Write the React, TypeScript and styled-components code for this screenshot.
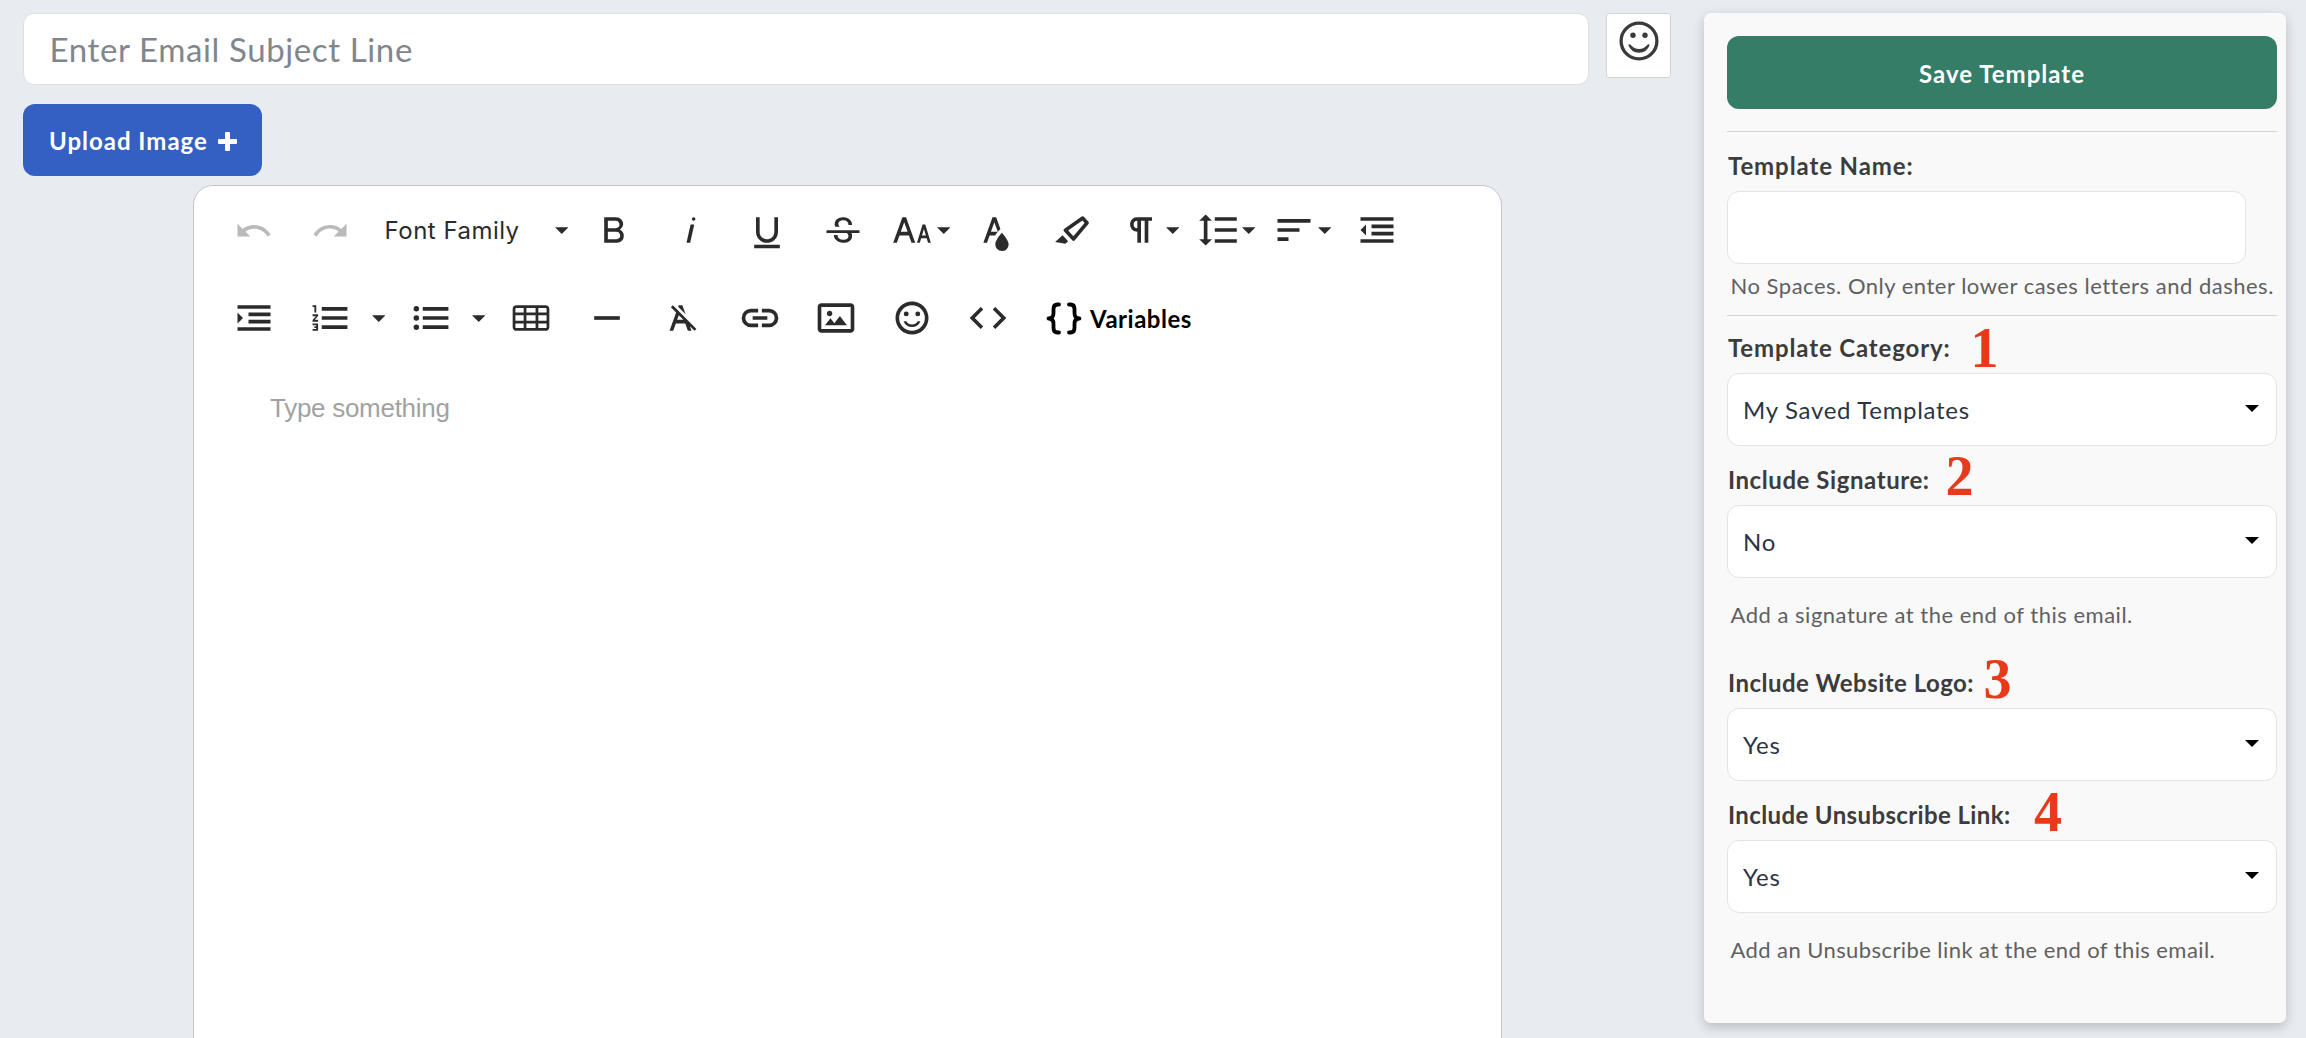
import React from "react";
import styled, { createGlobalStyle } from "styled-components";

const uiFont = `Lato, "Open Sans", sans-serif`;

const GlobalStyle = createGlobalStyle`
  *, *::before, *::after { box-sizing: border-box; }
  body { margin: 0; background: #e8ebf0; font-family: ${uiFont}; overflow: hidden; }
  button, input { font-family: inherit; }
`;

const Page = styled.div`
  display: flex;
  justify-content: space-between;
  width: 2306px;
  height: 1038px;
  padding: 13px 20px 0 23px;
  overflow: hidden;
`;

const Main = styled.main`
  display: flex;
  flex-direction: column;
  align-items: flex-start;
  width: 1648px;
`;

const SubjectRow = styled.div`
  display: flex;
  flex: none;
  justify-content: space-between;
  align-items: flex-start;
  width: 100%;
`;

const SubjectInput = styled.input`
  width: 1566px;
  height: 72px;
  padding: 0 25.5px;
  border: 1px solid #e0e0e0;
  border-radius: 11px;
  background: #fff;
  color: #333;
  font-size: 33px;
  letter-spacing: 0.62px;
  &::placeholder { color: #80868e; opacity: 1; }
`;

const EmojiButton = styled.button`
  display: flex;
  justify-content: center;
  align-items: flex-start;
  width: 65px;
  height: 65px;
  padding: 5.5px 0 0;
  border: 1px solid #d3d5d8;
  border-radius: 3px;
  background: #fff;
`;

const UploadButton = styled.button`
  display: flex;
  flex: none;
  align-items: center;
  gap: 10px;
  width: 239px;
  height: 72px;
  margin-top: 19px;
  padding: 0 0 0 26px;
  border: 0;
  border-radius: 12px;
  background: #345fc3;
  color: #fff;
  font-size: 24px;
  font-weight: 700;
  letter-spacing: 0.99px;
  svg { margin-top: 2px; }
`;

const Editor = styled.section`
  flex: none;
  width: 1309px;
  height: 900px;
  margin: 9px 0 0 170px;
  border: 1px solid #c6c6c8;
  border-radius: 20px;
  background: #fff;
`;

const ToolRow = styled.div`
  display: flex;
  align-items: stretch;
  height: 88px;
  padding-left: 22px;
`;

const ToolButton = styled.button<{ $muted?: boolean; $menu?: boolean }>`
  display: flex;
  align-items: center;
  justify-content: ${(p) => (p.$menu ? "flex-start" : "center")};
  gap: 2.5px;
  width: 76.3px;
  padding: 0 0 0 ${(p) => (p.$menu ? "9px" : "0")};
  border: 0;
  background: none;
  color: ${(p) => (p.$muted ? "#bababa" : "#2b2b2b")};
  svg { flex: none; }
`;

const ListOptions = styled.button`
  display: flex;
  align-items: center;
  width: 23.8px;
  padding: 0 0 0 3px;
  border: 0;
  background: none;
  color: #2b2b2b;
`;

const FontFamilyButton = styled.button`
  display: flex;
  align-items: center;
  justify-content: space-between;
  width: 207.6px;
  padding: 0 8px 0 16px;
  border: 0;
  background: none;
  color: #2b2b2b;
  font-family: Inter, sans-serif;
  font-size: 24px;
  letter-spacing: 0.48px;
`;

const VariablesButton = styled.button`
  display: flex;
  align-items: center;
  gap: 8.5px;
  margin-left: 19px;
  padding: 0;
  border: 0;
  background: none;
  color: #000;
  font-size: 24px;
  font-weight: 700;
  letter-spacing: 0.5px;
`;

const Canvas = styled.div`
  padding: 31px 76px;
  color: #a2a2a2;
  font: 26px/30px "Liberation Sans", Arial, sans-serif;
  letter-spacing: -0.28px;
`;

const Sidebar = styled.aside`
  display: flex;
  flex-direction: column;
  width: 582px;
  height: 1010px;
  padding: 23px 9px 0 23px;
  border-radius: 7px;
  background: #f9f9f9;
  box-shadow: 0 4px 12px rgba(0, 0, 0, 0.2);
`;

const SaveButton = styled.button`
  flex: none;
  height: 73px;
  padding: 1px 0 0;
  border: 0;
  border-radius: 12px;
  background: #357d66;
  color: #fff;
  font-size: 24px;
  font-weight: 700;
  letter-spacing: 1.02px;
`;

const Divider = styled.hr<{ $top: number }>`
  flex: none;
  width: 100%;
  height: 1px;
  margin: ${(p) => p.$top}px 0 0;
  border: 0;
  background: #d3d5d5;
`;

const Label = styled.label<{ $top: number; $tracking: number }>`
  position: relative;
  flex: none;
  height: 32px;
  margin: ${(p) => p.$top}px 0 10px 1px;
  color: #3c3c3c;
  font-size: 24px;
  font-weight: 700;
  line-height: 34px;
  letter-spacing: ${(p) => p.$tracking}px;
`;

const StepMark = styled.span<{ $left: number; $shift?: number }>`
  position: absolute;
  top: ${(p) => p.$shift ?? 0}px;
  left: ${(p) => p.$left}px;
  color: #e8391a;
  font: 700 56px/32px "Liberation Serif", "Times New Roman", serif;
  letter-spacing: 0;
`;

const NameInput = styled.input`
  flex: none;
  width: 519px;
  height: 73px;
  border: 1px solid #e3e3e3;
  border-radius: 12px;
  background: #fff;
`;

const SelectBox = styled.button`
  display: flex;
  flex: none;
  align-items: center;
  justify-content: space-between;
  height: 73px;
  padding: 0 17px 0 15px;
  border: 1px solid #e3e3e3;
  border-radius: 12px;
  background: #fff;
  color: #000;
`;

const SelectValue = styled.span`
  color: #2b3445;
  font-size: 24px;
  letter-spacing: 0.7px;
`;

const SelectArrow = styled.svg`
  margin-bottom: 2px;
`;

const Help = styled.p<{ $top: number; $tracking: number }>`
  flex: none;
  margin: ${(p) => p.$top}px 0 0 3.5px;
  color: #606060;
  font-size: 22px;
  line-height: 30px;
  letter-spacing: ${(p) => p.$tracking}px;
  white-space: nowrap;
`;

const icons = {
  undo: "M10.4,9.4c-1.7,0.3-3.2,0.9-4.6,2L3,8.5v7h7l-2.7-2.7c3.7-2.6,8.8-1.8,11.5,1.9c0.2,0.3,0.4,0.5,0.5,0.8l1.8-0.9C18.9,10.8,14.7,8.7,10.4,9.4z",
  redo: "M13.6,9.4c1.7,0.3,3.2,0.9,4.6,2L21,8.5v7h-7l2.7-2.7C13,10.1,7.9,11,5.3,14.7c-0.2,0.3-0.4,0.5-0.5,0.8L3,14.6C5.1,10.8,9.3,8.7,13.6,9.4z",
  bold: "M15.25,11.8h0A3.68,3.68,0,0,0,17,9a3.93,3.93,0,0,0-3.86-4H6.65V19h7a3.74,3.74,0,0,0,3.7-3.78V15.1A3.64,3.64,0,0,0,15.25,11.8ZM8.65,7h4.2a2.09,2.09,0,0,1,2,1.3,2.09,2.09,0,0,1-1.37,2.61,2.23,2.23,0,0,1-.63.09H8.65Zm4.6,10H8.65V13h4.6a2.09,2.09,0,0,1,2,1.3,2.09,2.09,0,0,1-1.37,2.61A2.23,2.23,0,0,1,13.25,17Z",
  italic: "M11.76,9h2l-2.2,10h-2Zm1.68-4a1,1,0,1,0,1,1,1,1,0,0,0-1-1Z",
  underline: "M19,20v2H5V20Zm-3-6.785a4,4,0,0,1-5.74,3.4A3.75,3.75,0,0,1,8,13.085V5.005H6v8.21a6,6,0,0,0,8,5.44,5.851,5.851,0,0,0,4-5.65v-8H16ZM16,5v0h2V5ZM8,5H6v0H8Z",
  strike: "M3,12.20294H21v1.5H16.63422a3.59782,3.59782,0,0,1,.34942,1.5929,3.252,3.252,0,0,1-1.31427,2.6997A5.55082,5.55082,0,0,1,12.20251,19a6.4421,6.4421,0,0,1-2.62335-.539,4.46335,4.46335,0,0,1-1.89264-1.48816,3.668,3.668,0,0,1-.67016-2.15546V14.704h.28723v-.0011h.34149v.0011H9.02v.11334a2.18275,2.18275,0,0,0,.85413,1.83069,3.69,3.69,0,0,0,2.32836.67926,3.38778,3.38778,0,0,0,2.07666-.5462,1.73346,1.73346,0,0,0,.7013-1.46655,1.69749,1.69749,0,0,0-.647-1.43439,3.00525,3.00525,0,0,0-.27491-.17725H3ZM16.34473,7.05981A4.18163,4.18163,0,0,0,14.6236,5.5462,5.627,5.627,0,0,0,12.11072,5,5.16083,5.16083,0,0,0,8.74719,6.06213,3.36315,3.36315,0,0,0,7.44006,8.76855a3.22923,3.22923,0,0,0,.3216,1.42786h2.59668c-.08338-.05365-.18537-.10577-.25269-.16064a1.60652,1.60652,0,0,1-.65283-1.30036,1.79843,1.79843,0,0,1,.68842-1.5108,3.12971,3.12971,0,0,1,1.96948-.55243,3.04779,3.04779,0,0,1,2.106.6687,2.35066,2.35066,0,0,1,.736,1.83258v.11341h2.00317V9.17346A3.90013,3.90013,0,0,0,16.34473,7.05981Z",
  fontSize: "M20.75,19h1.5l-3-10h-1.5l-3,10h1.5L17,16.5h3Zm-3.3-4,1.05-3.5L19.55,15Zm-5.7,4h2l-5-14h-2l-5,14h2l1.43-4h5.14ZM5.89,13,7.75,7.8,9.61,13Z",
  textColor: "M15.2,13.494s-3.6,3.9-3.6,6.3a3.65,3.65,0,0,0,7.3.1v-.1C18.9,17.394,15.2,13.494,15.2,13.494Zm-1.47-1.357.669-.724L12.1,5h-2l-5,14h2l1.43-4h2.943A24.426,24.426,0,0,1,13.726,12.137ZM11.1,7.8l1.86,5.2H9.244Z",
  highlight: "M9.91752,12.24082l7.74791-5.39017,1.17942,1.29591-6.094,7.20747L9.91752,12.24082M7.58741,12.652l4.53533,4.98327a.93412.93412,0,0,0,1.39531-.0909L20.96943,8.7314A.90827.90827,0,0,0,20.99075,7.533l-2.513-2.76116a.90827.90827,0,0,0-1.19509-.09132L7.809,11.27135A.93412.93412,0,0,0,7.58741,12.652ZM2.7939,18.52772,8.41126,19.5l1.47913-1.34617-3.02889-3.328Z",
  paragraph: "M10.15,5A4.11,4.11,0,0,0,6.08,8.18,4,4,0,0,0,10,13v6h2V7h2V19h2V7h2V5ZM8,9a2,2,0,0,1,2-2v4A2,2,0,0,1,8,9Z",
  lineHeight: "M6.25,7h2.5L5.25,3.5,1.75,7h2.5V17H1.75l3.5,3.5L8.75,17H6.25Zm4-2V7h12V5Zm0,14h12V17h-12Zm0-6h12V11h-12Z",
  alignLeft: "M3,18h6v-2H3V18z M3,11v2h12v-2H3z M3,6v2h18V6H3z",
  outdent: "M3,12l3,3V9L3,12z M3,19h18v-2H3V19z M3,7h18V5H3V7z M9,11h12V9H9V11z M9,15h12v-2H9V15z",
  indent: "M3,9v6l3-3L3,9z M3,19h18v-2H3V19z M3,7h18V5H3V7z M9,11h12V9H9V11z M9,15h12v-2H9V15z",
  orderedList: "M2.5,16h2v.5h-1v1h1V18h-2v1h3V15h-3Zm1-7h1V5h-2V6h1Zm-1,2H4.3L2.5,13.1V14h3V13H3.7l1.8-2.1V10h-3Zm5-5V8h14V6Zm0,12h14V16H7.5Zm0-5h14V11H7.5Z",
  unorderedList: "M4,10.5a1.5,1.5,0,1,0,0,3a1.5,1.5,0,1,0,0-3ZM4,5.5a1.5,1.5,0,1,0,0,3a1.5,1.5,0,1,0,0-3ZM4,15.5a1.5,1.5,0,1,0,0,3a1.5,1.5,0,1,0,0-3ZM7.5,6V8h14V6ZM7.5,18h14V16H7.5ZM7.5,13h14V11H7.5Z",
  table: "M20,5H4C2.9,5,2,5.9,2,7v2v1.5v3V15v2c0,1.1,0.9,2,2,2h16c1.1,0,2-0.9,2-2v-2v-1.5v-3V9V7C22,5.9,21.1,5,20,5z M9.5,13.5v-3h5v3H9.5z M14.5,15v2.5h-5V15H14.5z M9.5,9V6.5h5V9H9.5z M3.5,7c0-0.3,0.2-0.5,0.5-0.5h4V9H3.5V7z M3.5,10.5H8v3H3.5V10.5z M3.5,17v-2H8v2.5H4C3.7,17.5,3.5,17.3,3.5,17z M20.5,17c0,0.3-0.2,0.5-0.5,0.5h-4V15h4.5V17z M20.5,13.5H16v-3h4.5V13.5z M16,9V6.5h4c0.3,0,0.5,0.2,0.5,0.5v2H16z",
  rule: "M5,11h14v2H5V11z",
  clear: "M11.48,10.09l-1.2-1.21L8.8,7.41,6.43,5,5.37,6.1,8.25,9,4.66,19h2l1.43-4h5.14l1.43,4h2l-.89-2.51L18.27,19l1.07-1.06L14.59,13.2ZM8.8,13l.92-2.56L12.27,13Zm.56-7.15L9.66,5h2l1.75,4.9Z",
  link: "M11,17H7A5,5,0,0,1,7,7h4V9H7a3,3,0,0,0,0,6h4ZM17,7H13V9h4a3,3,0,0,1,0,6H13v2h4A5,5,0,0,0,17,7Zm-1,4H8v2h8Z",
  image: "M14.2,11l3.8,5H6l3-3.9l2.1,2.7L14,11H14.2z M8.5,11c0.8,0,1.5-0.7,1.5-1.5S9.3,8,8.5,8S7,8.7,7,9.5C7,10.3,7.7,11,8.5,11z M22,6v12c0,1.1-0.9,2-2,2H4c-1.1,0-2-0.9-2-2V6c0-1.1,0.9-2,2-2h16C21.1,4,22,4.9,22,6z M20,8.8V6H4v12h16V8.8z",
  smile: "M11.991,3A9,9,0,1,0,21,12,8.99557,8.99557,0,0,0,11.991,3ZM12,19a7,7,0,1,1,7-7A6.99808,6.99808,0,0,1,12,19Zm3.105-5.2h1.503a4.94542,4.94542,0,0,1-9.216,0H8.895a3.57808,3.57808,0,0,0,6.21,0ZM7.5,9.75A1.35,1.35,0,1,1,8.85,11.1,1.35,1.35,0,0,1,7.5,9.75Zm6.3,0a1.35,1.35,0,1,1,1.35,1.35A1.35,1.35,0,0,1,13.8,9.75Z",
  code: "M9.4,16.6,4.8,12,9.4,7.4,8,6,2,12l6,6Zm5.2,0L19.2,12,14.6,7.4,16,6l6,6-6,6Z",
};

type IconName = keyof typeof icons;

const Icon = ({ name }: { name: IconName }) => (
  <svg width="44" height="44" viewBox="0 0 24 24" fill="currentColor">
    <path d={icons[name]} />
  </svg>
);

const Caret = () => (
  <svg width="13.5" height="7" viewBox="0 0 14 7" fill="currentColor">
    <path d="M0 0H14L7 7Z" />
  </svg>
);

const Tool = ({ name, menu, muted }: { name: IconName; menu?: boolean; muted?: boolean }) => (
  <ToolButton $menu={menu} $muted={muted} aria-label={name}>
    <Icon name={name} />
    {menu && <Caret />}
  </ToolButton>
);

const Select = ({ value }: { value: string }) => (
  <SelectBox>
    <SelectValue>{value}</SelectValue>
    <SelectArrow width="14" height="7" viewBox="0 0 14 7" fill="currentColor">
      <path d="M0 0H14L7 7Z" />
    </SelectArrow>
  </SelectBox>
);

export default function App() {
  return (
    <>
      <GlobalStyle />
      <Page>
        <Main>
          <SubjectRow>
            <SubjectInput placeholder="Enter Email Subject Line" />
            <EmojiButton aria-label="emoji">
              <svg width="42" height="42" viewBox="0 0 42 42" fill="#3a3a3a">
                <circle cx="21" cy="21" r="17.9" fill="none" stroke="#3a3a3a" strokeWidth="3.3" />
                <circle cx="15" cy="15.2" r="2.7" />
                <circle cx="27" cy="15.2" r="2.7" />
                <path d="M10.200 24.800q1.200-1.200 2.300 0Q16 29 21 29t8.500-4.200q1.100-1.200 2.300 0Q29 32.700 21 32.700T10.200 24.800Z" />
              </svg>
            </EmojiButton>
          </SubjectRow>
          <UploadButton>
            Upload Image
            <svg width="19" height="19" viewBox="0 0 19 19" fill="#fff">
              <path d="M8 0h3q1 0 1 1v6h6q1 0 1 1v3q0 1-1 1h-6v6q0 1-1 1H8q-1 0-1-1v-6H1q-1 0-1-1V8q0-1 1-1h6V1q0-1 1-1Z" />
            </svg>
          </UploadButton>
          <Editor>
            <ToolRow>
              <Tool name="undo" muted />
              <Tool name="redo" muted />
              <FontFamilyButton>
                Font Family
                <Caret />
              </FontFamilyButton>
              <Tool name="bold" />
              <Tool name="italic" />
              <Tool name="underline" />
              <Tool name="strike" />
              <Tool name="fontSize" menu />
              <Tool name="textColor" />
              <Tool name="highlight" />
              <Tool name="paragraph" menu />
              <Tool name="lineHeight" menu />
              <Tool name="alignLeft" menu />
              <Tool name="outdent" />
            </ToolRow>
            <ToolRow>
              <Tool name="indent" />
              <Tool name="orderedList" />
              <ListOptions aria-label="ordered list options"><Caret /></ListOptions>
              <Tool name="unorderedList" />
              <ListOptions aria-label="unordered list options"><Caret /></ListOptions>
              <Tool name="table" />
              <Tool name="rule" />
              <Tool name="clear" />
              <Tool name="link" />
              <Tool name="image" />
              <Tool name="smile" />
              <Tool name="code" />
              <VariablesButton>
                <svg width="36" height="33" viewBox="0 0 36 33" fill="none" stroke="#000" strokeWidth="3.8" strokeLinecap="round" strokeLinejoin="round">
                  <path d="M13 2.5h-1.500Q7.500 2.500 7.500 7v4Q7.500 16.500 2.500 16.500Q7.500 16.500 7.500 22v4Q7.500 30.500 11.500 30.500H13" />
                  <path d="M23 2.500h1.500Q28.500 2.500 28.500 7v4Q28.500 16.500 33.500 16.500Q28.500 16.500 28.500 22v4Q28.500 30.500 24.500 30.500H23" />
                </svg>
                Variables
              </VariablesButton>
            </ToolRow>
            <Canvas>Type something</Canvas>
          </Editor>
        </Main>
        <Sidebar>
          <SaveButton>Save Template</SaveButton>
          <Divider $top={22} />
          <Label $top={17} $tracking={0.9}>Template Name:</Label>
          <NameInput />
          <Help $top={7} $tracking={0.51}>No Spaces. Only enter lower cases letters and dashes.</Help>
          <Divider $top={14} />
          <Label $top={15} $tracking={0.86}>
            Template Category:
            <StepMark $left={242.5} $shift={1}>1</StepMark>
          </Label>
          <Select value="My Saved Templates" />
          <Label $top={17} $tracking={0.57}>
            Include Signature:
            <StepMark $left={217.5} $shift={-3}>2</StepMark>
          </Label>
          <Select value="No" />
          <Help $top={22} $tracking={0.51}>Add a signature at the end of this email.</Help>
          <Label $top={36} $tracking={0.48}>
            Include Website Logo:
            <StepMark $left={255.5} $shift={-3}>3</StepMark>
          </Label>
          <Select value="Yes" />
          <Label $top={17} $tracking={0.38}>
            Include Unsubscribe Link:
            <StepMark $left={306} $shift={-2}>4</StepMark>
          </Label>
          <Select value="Yes" />
          <Help $top={22} $tracking={0.42}>Add an Unsubscribe link at the end of this email.</Help>
        </Sidebar>
      </Page>
    </>
  );
}
